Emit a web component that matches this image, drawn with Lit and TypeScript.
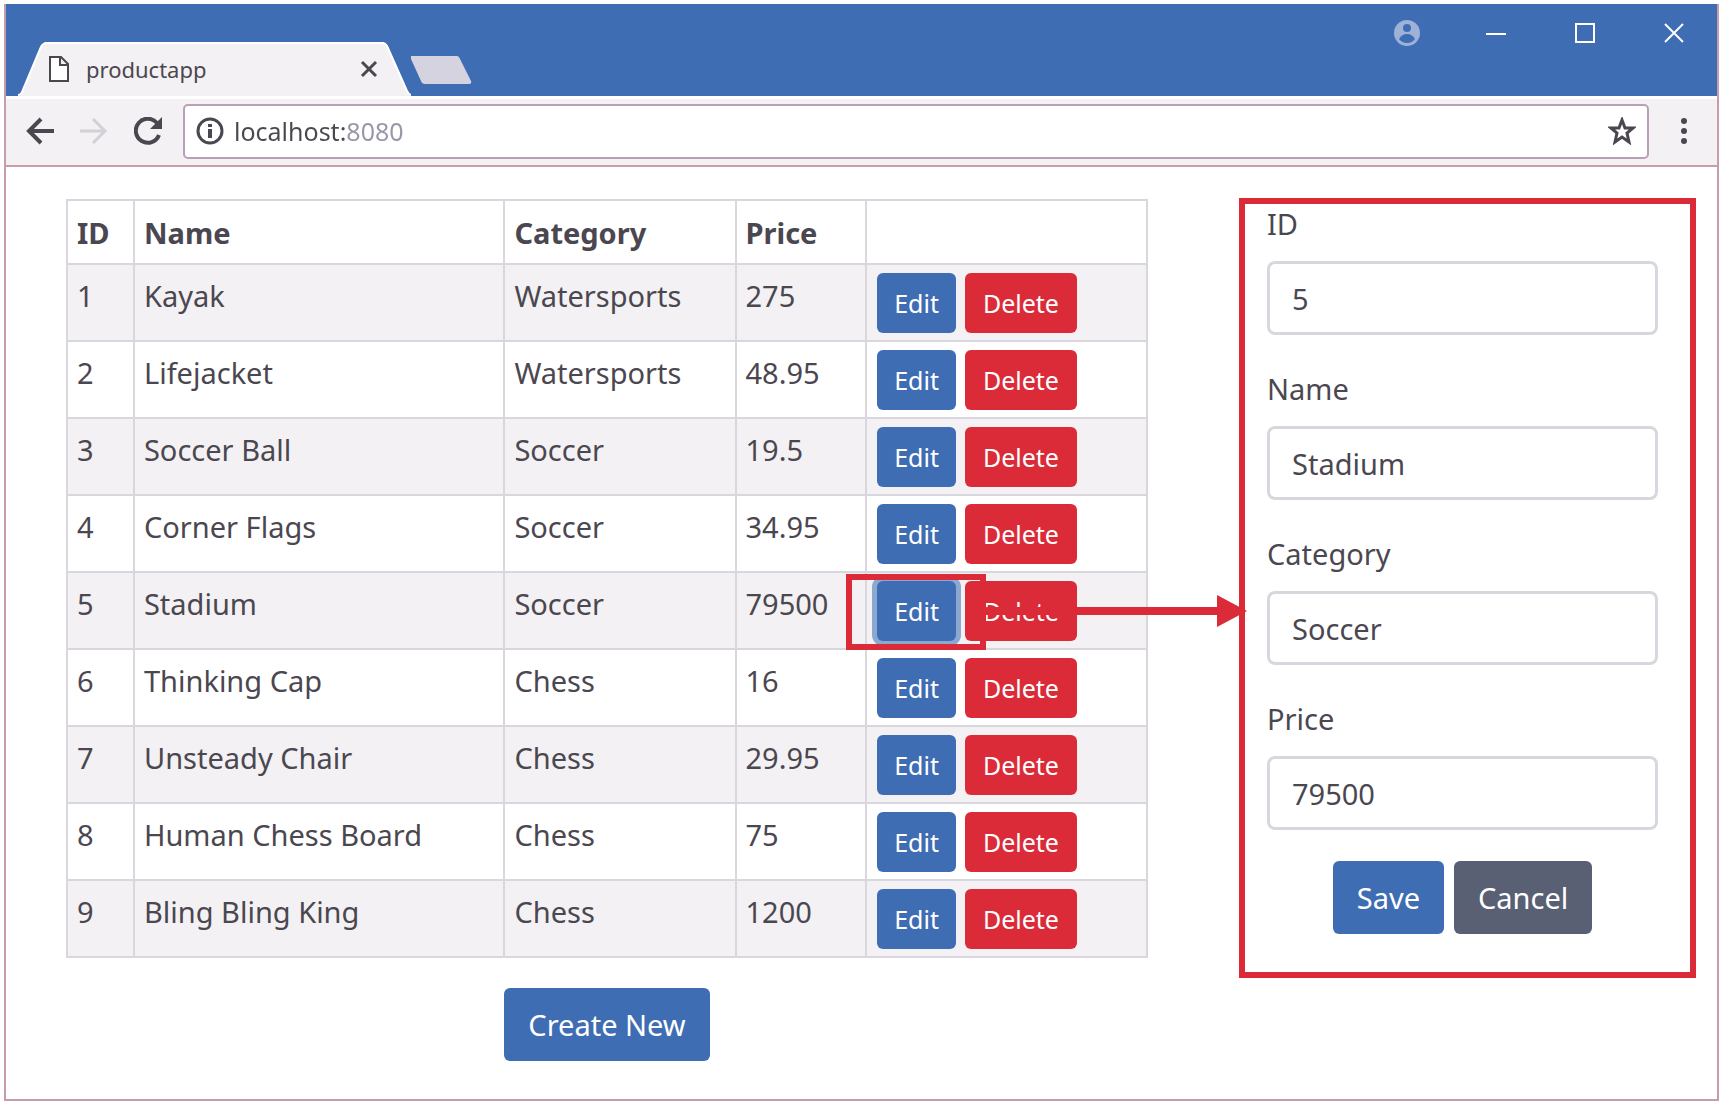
import { LitElement, html, svg, css, nothing } from "lit";
import { customElement, property, state } from "lit/decorators.js";
import { classMap } from "lit/directives/class-map.js";

interface Product {
  id: number;
  name: string;
  category: string;
  price: number;
}

const PRODUCTS: Product[] = [
  { id: 1, name: "Kayak", category: "Watersports", price: 275 },
  { id: 2, name: "Lifejacket", category: "Watersports", price: 48.95 },
  { id: 3, name: "Soccer Ball", category: "Soccer", price: 19.5 },
  { id: 4, name: "Corner Flags", category: "Soccer", price: 34.95 },
  { id: 5, name: "Stadium", category: "Soccer", price: 79500 },
  { id: 6, name: "Thinking Cap", category: "Chess", price: 16 },
  { id: 7, name: "Unsteady Chair", category: "Chess", price: 29.95 },
  { id: 8, name: "Human Chess Board", category: "Chess", price: 75 },
  { id: 9, name: "Bling Bling King", category: "Chess", price: 1200 },
];

const shared = css`
  * {
    box-sizing: border-box;
  }
  button,
  input {
    font: inherit;
    margin: 0;
  }
  .btn {
    border: 0;
    border-radius: 6px;
    color: #fff;
    background: var(--blue);
    height: 73px;
    padding: 0 24px;
    line-height: 46px;
    white-space: nowrap;
  }
  .btn.small {
    height: 60px;
    padding: 0 17px;
    font-size: 25px;
    line-height: 36px;
  }
  .btn.danger {
    padding: 0 18px;
    background: var(--red);
  }
  .btn.secondary {
    background: #5a6074;
  }
`;

@customElement("browser-bar")
export class BrowserBar extends LitElement {
  static styles = [
    shared,
    css`
      :host {
        display: block;
      }
      .titlebar {
        display: flex;
        align-items: flex-end;
        height: 92px;
        background: var(--blue);
      }
      .tab {
        position: relative;
        display: flex;
        align-items: center;
        width: 393px;
        height: 54px;
        margin-left: 12px;
        padding: 0 33px 0 30px;
      }
      .tab-shape {
        position: absolute;
        inset: 0;
        width: 100%;
        height: 100%;
      }
      .tab-icon,
      .tab-title,
      .tab-close {
        position: relative;
      }
      .tab-title {
        flex: 1;
        padding-left: 16px;
        font-size: 22px;
        line-height: 30px;
      }
      .icon {
        display: flex;
        padding: 0;
        border: 0;
        background: none;
      }
      .new-tab {
        align-self: flex-end;
        margin: 0 auto 12px 0;
      }
      .window-buttons {
        display: flex;
        align-self: flex-start;
        align-items: center;
        gap: 61px;
        padding: 15px 29px 0 0;
      }
      .toolbar {
        display: flex;
        align-items: center;
        height: 71px;
        padding: 6px 20px 8px 20px;
        border-top: 3px solid #fff;
        border-bottom: 2px solid var(--frame);
        background: var(--grey);
      }
      .nav {
        display: flex;
        gap: 26px;
        padding-right: 21px;
      }
      .address {
        display: flex;
        flex: 1;
        align-items: center;
        height: 55px;
        margin-right: 22px;
        padding: 0 11px;
        border: 2px solid #b9a0b8;
        border-radius: 5px;
        background: #fff;
      }
      .url {
        flex: 1;
        min-width: 0;
        height: 40px;
        margin-left: 10px;
        padding: 0;
        border: 0;
        outline: 0;
        color: transparent;
        font-size: 25px;
        background: linear-gradient(90deg, var(--ink) 112px, #9a94a8 112px);
        -webkit-background-clip: text;
        background-clip: text;
      }
    `,
  ];

  render() {
    return html`
      <header class="titlebar">
        <div class="tab">
          <svg class="tab-shape" viewBox="0 0 394 54" preserveAspectRatio="none" aria-hidden="true">
            <path d="M0 54 Q3 54 4 50 L23 5 Q25 0 29 0 H365 Q368 0 370 4 L390 49 Q392 54 394 54Z" fill="#f3f1f3" />
            <path d="M0 53 Q3 53 4 50 L23 5 Q25 1 29 1 H365 Q368 1 370 4 L390 49 Q392 53 394 53" fill="none" stroke="#fff" stroke-width="2" />
          </svg>
          <svg class="tab-icon" width="22" height="28" viewBox="0 0 22 28" aria-hidden="true">
            <path d="M2 2 H13 L20 9 V26 H2Z M12 2 V10 H20" fill="#fff" stroke="#4b4750" stroke-width="2" />
          </svg>
          <span class="tab-title">productapp</span>
          <button class="icon tab-close" aria-label="Close tab">
            <svg width="18" height="18" viewBox="0 0 18 18">
              <path d="M2 2 L16 16 M16 2 L2 16" stroke="#4b4750" stroke-width="3" />
            </svg>
          </button>
        </div>
        <button class="icon new-tab" aria-label="New tab">
          <svg width="62" height="28" viewBox="0 0 62 28">
            <path d="M0 0 H46 Q48 0 49 3 L60 25 Q61 28 58 28 H14 Q11 28 10 25 L0 3Z" fill="#d6d3e0" />
          </svg>
        </button>
        <div class="window-buttons">
          <button class="icon" aria-label="Profile">
            <svg width="28" height="28" viewBox="0 0 28 28">
              <circle cx="14" cy="14" r="13" fill="#9db2d6" />
              <circle cx="14" cy="9" r="4" fill="#3f6db4" />
              <path d="M6 20 Q9 15 14 15 Q19 15 22 20 Q19 24 14 24 Q9 24 6 20Z" fill="#3f6db4" />
            </svg>
          </button>
          <button class="icon" aria-label="Minimize">
            <svg width="28" height="28" viewBox="0 0 28 28">
              <path d="M4 15 H24" stroke="#fff" stroke-width="2" />
            </svg>
          </button>
          <button class="icon" aria-label="Maximize">
            <svg width="28" height="28" viewBox="0 0 28 28">
              <path d="M5 5 H23 V23 H5Z" fill="none" stroke="#fff" stroke-width="2" />
            </svg>
          </button>
          <button class="icon" aria-label="Close window">
            <svg width="28" height="28" viewBox="0 0 28 28">
              <path d="M5 5 L23 23 M23 5 L5 23" stroke="#fff" stroke-width="2" />
            </svg>
          </button>
        </div>
      </header>
      <nav class="toolbar">
        <div class="nav">
          <button class="icon" aria-label="Back">
            <svg width="28" height="28" viewBox="0 0 28 28">
              <path d="M28 14 H3 M15 2 L3 14 L15 26" fill="none" stroke="#4b4750" stroke-width="4" />
            </svg>
          </button>
          <button class="icon" aria-label="Forward">
            <svg width="28" height="28" viewBox="0 0 28 28">
              <path d="M0 14 H25 M13 2 L25 14 L13 26" fill="none" stroke="#d3d0d7" stroke-width="3" />
            </svg>
          </button>
          <button class="icon" aria-label="Reload">
            <svg width="28" height="28" viewBox="0 0 28 28">
              <path d="M25 18 A12 12 0 1 1 23 6" fill="none" stroke="#4b4750" stroke-width="4" />
              <path d="M28 0 V12 H16Z" fill="#4b4750" />
            </svg>
          </button>
        </div>
        <div class="address">
          <svg width="28" height="28" viewBox="0 0 28 28" aria-hidden="true">
            <circle cx="14" cy="14" r="12" fill="none" stroke="#4b4750" stroke-width="3" />
            <path d="M14 12 V21 M14 7 V10" stroke="#4b4750" stroke-width="4" />
          </svg>
          <input class="url" aria-label="Address" value="localhost:8080" />
          <button class="icon" aria-label="Bookmark">
            <svg width="28" height="28" viewBox="0 0 28 28">
              <path
                d="M14 3 L17 11 H25 L19 16 L21 25 L14 20 L7 25 L9 16 L3 11 H11Z"
                fill="none"
                stroke="#4b4750"
                stroke-width="3"
              />
            </svg>
          </button>
        </div>
        <button class="icon" aria-label="Menu">
          <svg width="26" height="28" viewBox="0 0 26 28">
            <circle cx="13" cy="4" r="3" fill="#4b4750" />
            <circle cx="13" cy="14" r="3" fill="#4b4750" />
            <circle cx="13" cy="24" r="3" fill="#4b4750" />
          </svg>
        </button>
      </nav>
    `;
  }
}

@customElement("product-table")
export class ProductTable extends LitElement {
  @property({ attribute: false }) products: Product[] = [];
  @property({ type: Number }) selected = 0;

  static styles = [
    shared,
    css`
      :host {
        display: flex;
        flex-direction: column;
        align-items: center;
        gap: 30px;
      }
      table {
        width: 100%;
        table-layout: fixed;
        border-collapse: collapse;
        line-height: 46px;
      }
      th,
      td {
        border: 2px solid var(--line);
        padding: 9px 9px 7px;
        text-align: left;
        vertical-align: top;
      }
      td {
        padding-top: 8px;
      }
      td:last-child {
        padding-left: 10px;
      }
      th {
        font-weight: 700;
      }
      tbody tr:nth-child(odd) {
        background: var(--grey);
      }
      .col-id {
        width: 6.2%;
      }
      .col-name {
        width: 34.3%;
      }
      .col-category {
        width: 21.4%;
      }
      .col-price {
        width: 12.1%;
      }
      .actions {
        display: flex;
        gap: 9px;
      }
      .edit {
        position: relative;
        display: flex;
      }
      .focused .btn {
        box-shadow: 0 0 0 5px #8ba9d0;
      }
      .focused::before {
        content: "";
        position: absolute;
        inset: -7px -30px -9px -31px;
        z-index: 1;
        border: 6px solid var(--red);
        pointer-events: none;
      }
      .arrow {
        position: absolute;
        left: calc(100% + 27px);
        top: 14px;
        z-index: 2;
        pointer-events: none;
      }
    `,
  ];

  private pick(p: Product) {
    this.dispatchEvent(new CustomEvent("pick", { detail: p.id }));
  }

  render() {
    const arrow = html`<svg class="arrow" width="264" height="32" viewBox="0 0 264 32" aria-hidden="true">
      ${svg`<path d="M0 12 H234 V0 L264 16 L234 32 V20 H0Z" fill="#db2b39" />`}
    </svg>`;
    return html`
      <table>
        <colgroup>
          <col class="col-id" />
          <col class="col-name" />
          <col class="col-category" />
          <col class="col-price" />
          <col />
        </colgroup>
        <thead>
          <tr>
            <th>ID</th>
            <th>Name</th>
            <th>Category</th>
            <th>Price</th>
            <th></th>
          </tr>
        </thead>
        <tbody>
          ${this.products.map((p) => {
            const focused = p.id === this.selected;
            return html`<tr>
              <td>${p.id}</td>
              <td>${p.name}</td>
              <td>${p.category}</td>
              <td>${p.price}</td>
              <td>
                <div class="actions">
                  <div class=${classMap({ edit: true, focused })}>
                    <button class="btn small" @click=${() => this.pick(p)}>Edit</button>
                    ${focused ? arrow : nothing}
                  </div>
                  <button class="btn small danger">Delete</button>
                </div>
              </td>
            </tr>`;
          })}
        </tbody>
      </table>
      <button class="btn">Create New</button>
    `;
  }
}

@customElement("product-editor")
export class ProductEditor extends LitElement {
  @property({ attribute: false }) product?: Product;

  static styles = [
    shared,
    css`
      :host {
        display: block;
      }
      .editor {
        display: flex;
        flex-direction: column;
        gap: 31px;
        padding: 0 32px 38px 22px;
        border: 6px solid var(--red);
      }
      .fields {
        display: flex;
        flex-direction: column;
        gap: 34px;
      }
      .field {
        display: flex;
        flex-direction: column;
        gap: 17px;
      }
      label {
        line-height: 40px;
      }
      input {
        width: 100%;
        height: 74px;
        padding: 0 22px;
        border: 3px solid var(--line);
        border-radius: 8px;
        outline: 0;
        color: var(--ink);
        background: #fff;
      }
      .buttons {
        display: flex;
        justify-content: center;
        gap: 10px;
      }
    `,
  ];

  private field(id: string, label: string, value: string | number) {
    return html`<div class="field">
      <label for=${id}>${label}</label>
      <input id=${id} .value=${String(value)} />
    </div>`;
  }

  render() {
    const p = this.product;
    if (!p) return nothing;
    return html`<form class="editor" @submit=${(e: Event) => e.preventDefault()}>
      <div class="fields">
        ${this.field("id", "ID", p.id)} ${this.field("name", "Name", p.name)}
        ${this.field("category", "Category", p.category)} ${this.field("price", "Price", p.price)}
      </div>
      <div class="buttons">
        <button class="btn" type="submit">Save</button>
        <button class="btn secondary" type="button">Cancel</button>
      </div>
    </form>`;
  }
}

@customElement("app-root")
export class AppRoot extends LitElement {
  @state() private selected = 5;

  static styles = [
    shared,
    css`
      :host {
        --blue: #3f6db4;
        --red: #db2b39;
        --grey: #f3f1f3;
        --line: #d9d7dd;
        --ink: #4b4750;
        --frame: #c79dab;
        display: block;
        box-sizing: border-box;
        min-height: 100vh;
        padding: 4px 6px 6px 4px;
        background: #fff;
        color: var(--ink);
        font-family: "Noto Sans", "Open Sans", sans-serif;
        font-size: 29px;
      }
      .window {
        min-height: calc(100vh - 10px);
        border: 2px solid var(--frame);
        border-top: 0;
      }
      .page {
        display: grid;
        grid-template-columns: 1082fr 457fr;
        align-items: start;
        gap: 91px;
        padding: 31px 21px 38px 60px;
      }
      .list {
        padding-top: 1px;
      }
    `,
  ];

  render() {
    return html`<div class="window">
      <browser-bar></browser-bar>
      <main class="page">
        <product-table
          class="list"
          .products=${PRODUCTS}
          .selected=${this.selected}
          @pick=${(e: CustomEvent<number>) => (this.selected = e.detail)}
        ></product-table>
        <product-editor .product=${PRODUCTS.find((p) => p.id === this.selected)}></product-editor>
      </main>
    </div>`;
  }
}
